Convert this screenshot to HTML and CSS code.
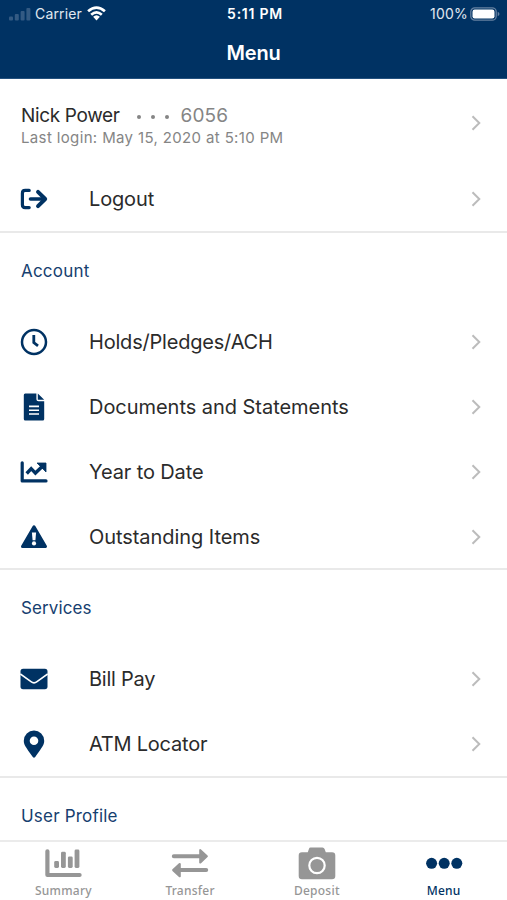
FILE: index.html
```html
<!DOCTYPE html>
<html lang="en">
<head>
<meta charset="utf-8">
<title>Menu</title>
<link rel="stylesheet" href="styles.css">
</head>
<body>
<svg class="defs" aria-hidden="true"><symbol id="chevron" viewBox="0 0 10 16"><path d="M1.5 1.2 8.3 8 1.5 14.8" fill="none" stroke="currentColor" stroke-width="2"/></symbol></svg>
<div class="screen">
  <header class="header">
    <div class="status">
      <div class="status-left">
        <svg class="signal" width="22" height="14" viewBox="0 0 22 14"><g fill="currentColor"><rect x="0" y="9.5" width="4" height="4" rx="1"/><rect x="5.8" y="7" width="4" height="6.5" rx="1"/><rect x="11.6" y="4" width="4" height="9.5" rx="1"/><rect x="17.4" y="1" width="4" height="12.5" rx="1"/></g></svg>
        <span class="carrier">Carrier</span>
        <svg class="wifi" width="19" height="15" viewBox="0 0 19 15"><g fill="none" stroke="currentColor" stroke-width="2.7"><path d="M1.1 5.3Q9.5-2.2 17.9 5.3"/><path d="M4.2 8.8Q9.5 4 14.8 8.8"/></g><path d="M6.1 10.8Q9.5 7.8 12.9 10.8L9.5 14.4Z" fill="currentColor"/></svg>
      </div>
      <span class="time">5:11 PM</span>
      <div class="status-right">
        <span class="percent">100%</span>
        <svg width="30" height="14" viewBox="0 0 30 14"><rect x=".8" y=".8" width="25.4" height="12.4" rx="4" fill="none" stroke="#6581a1" stroke-width="1.3"/><rect x="2.5" y="2.5" width="22" height="9" rx="2.2" fill="#fff"/><path d="M27.7 4.8Q29.5 5.5 29.5 7T27.7 9.2Z" fill="#6581a1"/></svg>
      </div>
    </div>
    <h1 class="title">Menu</h1>
  </header>
  <main class="content">
    <section class="group">
      <div class="profile">
        <div>
          <div class="who"><span class="name">Nick Power</span><span class="dots"><i></i><i></i><i></i></span><span class="number">6056</span></div>
          <div class="last">Last login: May 15, 2020 at 5:10 PM</div>
        </div>
        <svg class="chevron"><use href="#chevron"/></svg>
      </div>
      <div class="row">
        <svg class="icon" viewBox="0 0 28 28"><g fill="none" stroke="currentColor" stroke-width="3.2" stroke-linecap="round" stroke-linejoin="round"><path d="M9.2 5.4H5.2Q2.4 5.4 2.4 8.2V19.8Q2.4 22.6 5.2 22.6H9.2"/><path d="M10.5 14H24" stroke-width="3.6"/><path d="M18 6.8 25.2 14 18 21.2" stroke-width="3.9"/></g></svg>
        <span class="label logout">Logout</span><svg class="chevron"><use href="#chevron"/></svg>
      </div>
    </section>
    <section class="group">
      <h2 class="heading account">Account</h2>
      <div class="row">
        <svg class="icon" viewBox="0 0 28 28"><circle cx="14" cy="14" r="12" fill="none" stroke="currentColor" stroke-width="2.5"/><path d="M13.8 7V14.6L18 17.8" fill="none" stroke="currentColor" stroke-width="2.8"/></svg>
        <span class="label holds">Holds/Pledges/ACH</span><svg class="chevron"><use href="#chevron"/></svg>
      </div>
      <div class="row">
        <svg class="icon" viewBox="0 0 28 28"><path d="M5.2.5H16.4V6.2Q16.4 8.2 18.4 8.2H24.2V26Q24.2 27.5 22.7 27.5H5.3Q3.8 27.5 3.8 26V2Q3.8.5 5.2.5ZM17.8.5 24.2 6.8H17.8Z" fill="currentColor"/><path d="M9 13.4H19M9 17.2H19M9 21H19" stroke="#fff" stroke-width="1.6"/></svg>
        <span class="label documents">Documents and Statements</span><svg class="chevron"><use href="#chevron"/></svg>
      </div>
      <div class="row">
        <svg class="icon" viewBox="0 0 28 28"><path d="M2.2 4.8V22.9H26" fill="none" stroke="currentColor" stroke-width="3.2" stroke-linecap="round" stroke-linejoin="round"/><path d="M6.7 15.5 11.2 10.7 15.4 15.1 23 7.8" fill="none" stroke="currentColor" stroke-width="3.4"/><path d="M17 5H26V14Z" fill="currentColor" stroke="currentColor" stroke-width=".8" stroke-linejoin="round"/></svg>
        <span class="label year">Year to Date</span><svg class="chevron"><use href="#chevron"/></svg>
      </div>
      <div class="row">
        <svg class="icon" viewBox="0 0 28 28"><path d="M14 3.8 25.5 23.4H2.5Z" fill="currentColor" stroke="currentColor" stroke-width="3" stroke-linejoin="round"/><path d="M11.9 9.6H16.1L15.4 17.2H12.6Z" fill="#fff"/><circle cx="14" cy="20.4" r="2.1" fill="#fff"/></svg>
        <span class="label outstanding">Outstanding Items</span><svg class="chevron"><use href="#chevron"/></svg>
      </div>
    </section>
    <section class="group">
      <h2 class="heading services">Services</h2>
      <div class="row">
        <svg class="icon" viewBox="0 0 28 28"><rect x=".5" y="3.8" width="27" height="20.4" rx="2.6" fill="currentColor"/><path d="M.3 9 11 16.7Q14 19 17 16.7L27.7 9" fill="none" stroke="#fff" stroke-width="1.6"/></svg>
        <span class="label bill">Bill Pay</span><svg class="chevron"><use href="#chevron"/></svg>
      </div>
      <div class="row">
        <svg class="icon" viewBox="0 0 28 28"><path fill-rule="evenodd" d="M14 .5A10.2 10.2 0 0 1 24.2 10.7C24.2 14.6 22.6 16.6 15.2 27Q14 28.4 12.8 27C5.4 16.6 3.8 14.6 3.8 10.7A10.2 10.2 0 0 1 14 .5ZM14 6.4A4.3 4.3 0 1 0 14 15 4.3 4.3 0 1 0 14 6.4Z" fill="currentColor"/></svg>
        <span class="label atm">ATM Locator</span><svg class="chevron"><use href="#chevron"/></svg>
      </div>
    </section>
    <section class="group"><h2 class="heading user">User Profile</h2></section>
  </main>
  <nav class="tabs">
    <div class="tab">
      <svg width="38" height="34" viewBox="0 0 38 34"><path d="M3.4 4.3V28H35.6" fill="none" stroke="currentColor" stroke-width="4.2" stroke-linecap="round" stroke-linejoin="round"/><g fill="currentColor"><rect x="10.2" y="14" width="4.8" height="7" rx="1.4"/><rect x="17" y="4.8" width="4.8" height="16.2" rx="1.4"/><rect x="23.9" y="9.4" width="4.8" height="11.6" rx="1.4"/><rect x="30.6" y="2.5" width="4.8" height="18.5" rx="1.4"/></g></svg>
      <span class="summary">Summary</span>
    </div>
    <div class="tab">
      <svg width="38" height="34" viewBox="0 0 38 34"><g stroke="currentColor" stroke-linecap="round" stroke-linejoin="round" fill="currentColor"><path d="M2.8 9.3H30M8 23.1H35.2" stroke-width="4"/><path d="M29.3 3.2 35.8 9.3 29.3 15.4ZM8.7 17 2.2 23.1 8.7 29.2Z" stroke-width="2.2"/></g></svg>
      <span class="transfer">Transfer</span>
    </div>
    <div class="tab">
      <svg width="38" height="34" viewBox="0 0 38 34"><path d="M12.5.4H24.5Q26 .4 26.6 2L27.8 5.2H34Q37.3 5.2 37.3 8.5V28.9Q37.3 32.2 34 32.2H4Q.7 32.2 .7 28.9V8.5Q.7 5.2 4 5.2H9.8L11 1.8Q11.4 .4 12.5 .4Z" fill="currentColor"/><circle cx="19" cy="18.5" r="7.7" fill="none" stroke="#fff" stroke-width="2.2"/></svg>
      <span class="deposit">Deposit</span>
    </div>
    <div class="tab active">
      <svg width="38" height="34" viewBox="0 0 38 34"><g fill="currentColor"><circle cx="6.6" cy="16.3" r="5.5"/><circle cx="19.2" cy="16.3" r="5.5"/><circle cx="31.8" cy="16.3" r="5.5"/></g></svg>
      <span class="menu">Menu</span>
    </div>
  </nav>
</div>
</body>
</html>
```
FILE: styles.css
```css
* { box-sizing: border-box; }
body { margin: 0; font-family: Inter, sans-serif; background: #fff; color: #2b2b2b; }
h1, h2 { margin: 0; }
svg { display: block; flex: none; }
.defs { display: none; }
.screen { height: 900px; display: flex; flex-direction: column; overflow: hidden; }
.header { height: 79px; flex: none; background: #003263; color: #fff; border-bottom: 1px solid #24517e; }
.status { height: 27px; display: grid; grid-template-columns: 1fr auto 1fr; align-items: center; padding: 0 7px 0 9px; }
.status-left, .status-right { display: flex; align-items: center; }
.status-right { justify-content: flex-end; gap: 2px; }
.signal { color: #335a83; margin-right: 4px; }
.wifi { margin-left: 5px; }
.carrier, .percent { font-size: 14px; color: #e0e8f0; }
.carrier { letter-spacing: .15px; }
.percent { letter-spacing: .2px; }
.time { font-size: 14px; font-weight: 600; letter-spacing: .75px; margin-right: -1px; }
.title { height: 51px; line-height: 52px; text-align: center; font-size: 20px; font-weight: 600; letter-spacing: -.2px; }
.content { flex: 1; min-height: 0; overflow: hidden; }
.group { border-bottom: 2px solid #e9e9e9; }
.profile { height: 87px; padding: 5px 26px 0 21px; display: flex; align-items: center; justify-content: space-between; }
.who { display: flex; align-items: center; font-size: 19px; line-height: 24px; padding-top: 1px; }
.name { letter-spacing: -.35px; }
.dots { display: flex; gap: 10px; margin: 2px 12px 0 17px; }
.dots i { width: 4px; height: 4px; border-radius: 50%; background: #858585; }
.number { color: #858585; letter-spacing: .1px; }
.last { font-size: 15px; line-height: 20px; color: #858585; letter-spacing: .36px; }
.row { height: 64.8px; padding: 2px 26px 0 20px; display: flex; align-items: center; }
.icon { width: 28px; height: 28px; color: #003263; margin-right: 41px; }
.label { font-size: 20px; line-height: 28px; white-space: nowrap; }
.logout { letter-spacing: -.15px; }
.holds { letter-spacing: -.2px; }
.documents { letter-spacing: -.04px; }
.year { letter-spacing: -.12px; }
.outstanding { letter-spacing: -.06px; }
.bill { letter-spacing: -.25px; }
.atm { letter-spacing: -.23px; }
.chevron { width: 10px; height: 16px; color: #bcbcbc; margin-left: auto; }
.profile .chevron { margin-bottom: 5px; }
.heading { height: 76px; line-height: 76px; padding-left: 21px; font-size: 17px; font-weight: 400; color: #16406f; letter-spacing: .2px; }
.services { letter-spacing: .12px; }
.tabs { height: 60px; flex: none; border-top: 2px solid #ebebeb; background: #fff; display: grid; grid-template-columns: repeat(4, 1fr); }
.tab { display: flex; flex-direction: column; align-items: center; padding-top: 5px; color: #969696; font: 500 12px/18px "Noto Sans", sans-serif; letter-spacing: .25px; }
.tab span { margin-top: 1px; }
.active { color: #003263; }
```
